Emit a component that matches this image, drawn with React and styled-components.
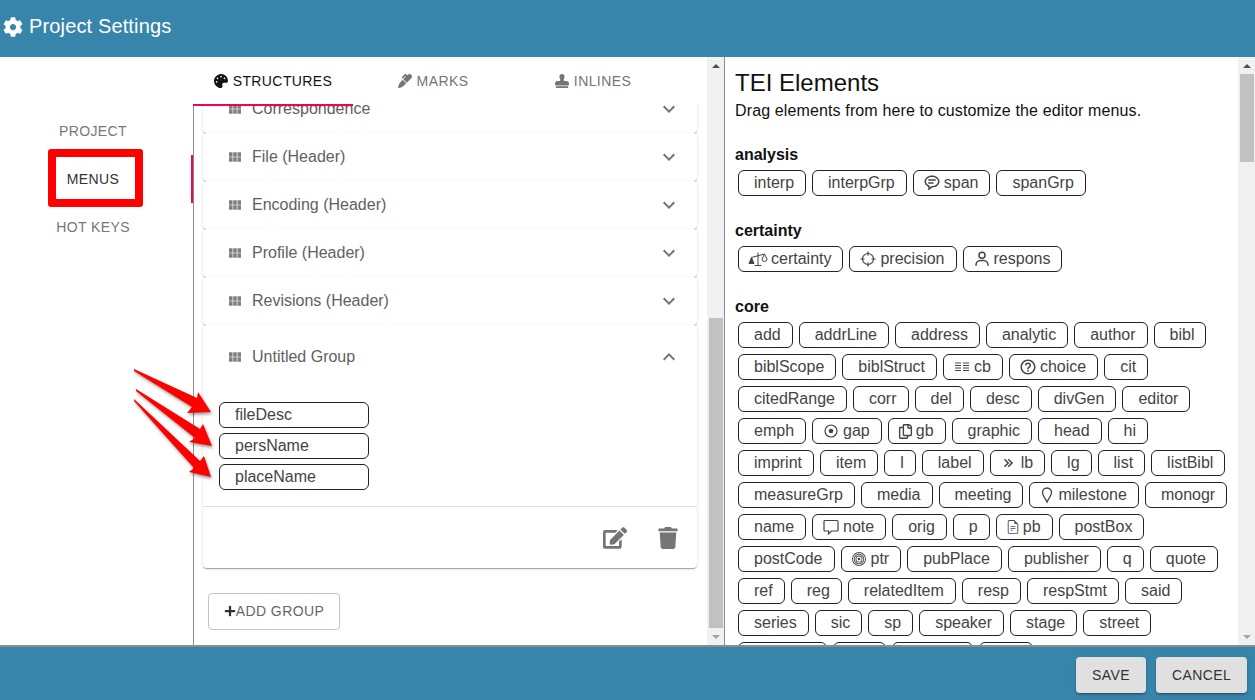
import React from "react";
import styled, { createGlobalStyle } from "styled-components";
import { FaCog, FaPalette, FaMarker, FaStamp, FaEdit, FaTrash, FaPlus, FaRegCopy } from "react-icons/fa";
import { MdViewModule, MdExpandMore, MdExpandLess } from "react-icons/md";
import { BiMessageRoundedDetail, BiUser, BiHelpCircle, BiChevronsRight } from "react-icons/bi";
import { BsBullseye, BsFileEarmarkText } from "react-icons/bs";

const GlobalStyle = createGlobalStyle`
  html, body {
    margin: 0;
    padding: 0;
    overflow: hidden;
    font-family: "Liberation Sans", Arial, sans-serif;
  }
`;

const Page = styled.div`
  position: relative;
  width: 1255px;
  height: 700px;
  display: flex;
  flex-direction: column;
  background: #fff;
  overflow: hidden;
`;

const Header = styled.header`
  height: 57px;
  flex: none;
  display: flex;
  align-items: center;
  gap: 6px;
  padding: 0 0 4px 3px;
  box-sizing: border-box;
  background: #3885ac;
  color: #fff;
  font-size: 20px;
  letter-spacing: 0.14px;
`;

const Body = styled.div`
  flex: 1;
  min-height: 0;
  display: flex;
  border-bottom: 2px solid #8c8c8c;
`;

const Nav = styled.nav`
  width: 193px;
  flex: none;
  padding-top: 50px;
  box-sizing: border-box;
`;

const NavTab = styled.div`
  position: relative;
  height: 48px;
  display: flex;
  align-items: center;
  justify-content: center;
  box-sizing: border-box;
  padding-right: 5px;
  border-right: 2px solid ${(p) => (p.$active ? "#f50057" : "transparent")};
  font-size: 14px;
  letter-spacing: 0.4px;
  color: ${(p) => (p.$active ? "#333" : "#777")};

  ${(p) =>
    p.$active &&
    `&::before {
      content: "";
      position: absolute;
      left: 48px;
      top: -6px;
      width: 95px;
      height: 58px;
      box-sizing: border-box;
      border: 8px solid #f00;
      border-radius: 3px;
    }`}
`;

const Middle = styled.section`
  width: 532px;
  flex: none;
  box-sizing: border-box;
  display: flex;
  border-right: 1px solid #8c8c8c;
`;

const MainColumn = styled.div`
  flex: 1;
  min-width: 0;
  display: flex;
  flex-direction: column;
`;

const Tabs = styled.div`
  height: 48px;
  flex: none;
  display: flex;
`;

const Tab = styled.div`
  position: relative;
  width: 160px;
  display: flex;
  align-items: center;
  justify-content: center;
  gap: 5px;
  font-size: 14px;
  letter-spacing: 0.4px;
  color: ${(p) => (p.$active ? "#111" : "#757575")};

  ${(p) =>
    p.$active &&
    `&::after {
      content: "";
      position: absolute;
      left: 0;
      right: 0;
      bottom: -1px;
      height: 2px;
      background: #f50057;
    }`}
`;

const GroupList = styled.div`
  flex: 1;
  min-height: 0;
  overflow: hidden;
  border-left: 1px solid #8c8c8c;
  padding: 0 10px 0 9px;
`;

const GroupStack = styled.div`
  margin-top: -20px;
`;

const Card = styled.div`
  background: #fff;
  border-radius: 4px;
  box-shadow: 0 2px 1px -1px rgba(0, 0, 0, 0.2), 0 1px 1px 0 rgba(0, 0, 0, 0.14),
    0 1px 3px 0 rgba(0, 0, 0, 0.12);
`;

const Summary = styled.div`
  height: ${(p) => (p.$open ? "64px" : "48px")};
  display: flex;
  align-items: center;
  padding: 0 16px 0 24px;
  box-sizing: border-box;
  color: #616161;
  font-size: 16px;
`;

const Grip = styled(MdViewModule)`
  font-size: 16px;
  color: #808080;
  margin-right: 9px;
`;

const Title = styled.span`
  flex: 1;
`;

const Chevron = styled.span`
  display: flex;
  font-size: 24px;
  color: #757575;
`;

const Details = styled.div`
  display: flex;
  flex-direction: column;
  gap: 5px;
  padding: 13px 16px 16px;
  border-bottom: 1px solid #e0e0e0;
`;

const MenuItem = styled.div`
  width: 150px;
  height: 26px;
  box-sizing: border-box;
  display: flex;
  align-items: center;
  padding-left: 15px;
  border: 1px solid #222;
  border-radius: 6px;
  font-size: 16px;
  color: #444;
`;

const Actions = styled.div`
  height: 61px;
  display: flex;
  align-items: center;
  justify-content: flex-end;
  gap: 30px;
  padding-right: 18px;
  color: #757575;
`;

const AddButton = styled.button`
  display: flex;
  align-items: center;
  justify-content: center;
  width: 132px;
  height: 37px;
  margin: 25px 0 0 5px;
  padding: 0 0 1px;
  background: #fff;
  border: 1px solid #c4c4c4;
  border-radius: 4px;
  font: 14px "Liberation Sans", Arial, sans-serif;
  letter-spacing: 0.4px;
  color: #666;

  svg {
    color: #333;
    font-size: 12px;
  }
`;

const Scrollbar = styled.div`
  width: 17px;
  flex: none;
  display: flex;
  flex-direction: column;
  align-items: center;
  background: #f1f1f1;
  box-sizing: border-box;
`;

const ArrowBox = styled.div`
  height: 17px;
  flex: none;
  display: flex;
  align-items: center;
  justify-content: center;
`;

const Arrow = styled.span`
  width: 0;
  height: 0;
  border-left: 4px solid transparent;
  border-right: 4px solid transparent;
  ${(p) =>
    p.$down ? "border-top: 4px solid #a3a3a3;" : "border-bottom: 4px solid #505050;"}
`;

const Track = styled.div`
  flex: 1;
  width: 100%;
  min-height: 0;
  display: flex;
  flex-direction: column;
  align-items: center;
`;

const Thumb = styled.div`
  width: 14px;
  flex: none;
  background: #c1c1c1;
  margin-top: ${(p) => p.$top}px;
  height: ${(p) => p.$height}px;
`;

const Right = styled.section`
  flex: 1;
  min-width: 0;
  display: flex;
`;

const Palette = styled.div`
  flex: 1;
  min-width: 0;
  overflow: hidden;
  padding: 12px 7px 0 10px;
  color: #111;
`;

const PaletteTitle = styled.h1`
  margin: 0;
  font-size: 24px;
  font-weight: 400;
  line-height: 28px;
`;

const PaletteHint = styled.p`
  margin: 5px 0 26px;
  font-size: 16px;
  line-height: 18px;
  letter-spacing: 0.13px;
`;

const Section = styled.div`
  margin-bottom: 23px;
`;

const SectionName = styled.h2`
  margin: 0 0 3px;
  font-size: 16px;
  font-weight: 700;
  line-height: 18px;
`;

const ChipWrap = styled.div`
  display: flex;
  flex-wrap: wrap;
`;

const Chip = styled.div`
  height: 26px;
  margin: 3px;
  box-sizing: border-box;
  display: flex;
  align-items: center;
  gap: 3px;
  padding: ${(p) => (p.$icon ? "0 11px 0 9px" : "0 11px 0 15px")};
  border: 1px solid #222;
  border-radius: 6px;
  font-size: 16px;
  color: #444;
  white-space: nowrap;

  svg {
    font-size: 18px;
    flex: none;
  }
`;

const Footer = styled.footer`
  height: 53px;
  flex: none;
  display: flex;
  justify-content: flex-end;
  align-items: center;
  gap: 10px;
  padding: 2px 8px 0 0;
  box-sizing: border-box;
  background: #3885ac;
`;

const FootButton = styled.button`
  height: 36px;
  width: ${(p) => p.$width}px;
  padding: 0;
  border: 0;
  border-radius: 4px;
  background: #e0e0e0;
  box-shadow: 0 3px 1px -2px rgba(0, 0, 0, 0.2), 0 2px 2px 0 rgba(0, 0, 0, 0.14),
    0 1px 5px 0 rgba(0, 0, 0, 0.12);
  font: 14px "Liberation Sans", Arial, sans-serif;
  letter-spacing: 0.4px;
  color: #333;
`;

const Annotations = styled.svg`
  position: absolute;
  left: 125px;
  top: 360px;
  width: 100px;
  height: 125px;
  filter: drop-shadow(1px 2px 1.5px rgba(0, 0, 0, 0.4));
`;

const Bullseye = styled(BsBullseye)`
  margin: 0 2px 0 1px;
`;

const ColumnsIcon = () => (
  <svg width="1em" height="1em" viewBox="0 0 18 18" stroke="currentColor" strokeWidth="1" fill="none">
    <path d="M2 5h6M2 7.500h6M2 10h6M2 12.500h6M10 5h6M10 7.500h6M10 10h6M10 12.500h6" />
  </svg>
);

const PinIcon = () => (
  <svg width="16" height="18" viewBox="0 0 16 18" stroke="currentColor" strokeWidth="1.3" fill="none">
    <path d="M8 16C6.500 12.500 3.500 10 3.500 6.500a4.500 4.500 0 0 1 9 0C12.500 10 9.500 12.500 8 16z" />
  </svg>
);

// tilted scales, left pan hanging lower
const ScaleIcon = () => (
  <svg width="20" height="16" viewBox="0 0 20 16" stroke="currentColor" strokeWidth="1" fill="none">
    <path d="M10 1.500V14M6.500 14.500h7M3.500 6.500l13-3.500" />
    <path d="M3.500 6.500L1 12.500h5z" fill="currentColor" />
    <path d="M16.500 3l-2.500 5a2.500 2.500 0 0 0 5 0z" />
  </svg>
);

const CrosshairIcon = () => (
  <svg width="1em" height="1em" viewBox="0 0 18 18" stroke="currentColor" strokeWidth="1.2" fill="none">
    <circle cx="9" cy="9" r="5.500" />
    <path d="M9 1.500v4M9 12.500v4M1.500 9h4M12.500 9h4" />
  </svg>
);

const RingIcon = () => (
  <svg width="1em" height="1em" viewBox="0 0 18 18">
    <circle cx="9" cy="9" r="6" stroke="currentColor" strokeWidth="1.2" fill="none" />
    <circle cx="9" cy="9" r="2.300" fill="currentColor" />
  </svg>
);

const BubbleIcon = () => (
  <svg width="1em" height="1em" viewBox="0 0 18 18" stroke="currentColor" strokeWidth="1.2" fill="none">
    <path d="M3 2.500h12a1 1 0 0 1 1 1v8.500a1 1 0 0 1-1 1H9.500l-3 2.800v-2.800H3a1 1 0 0 1-1-1V3.500a1 1 0 0 1 1-1z" />
  </svg>
);

const chipIcons = {
  span: <BiMessageRoundedDetail />,
  certainty: <ScaleIcon />,
  precision: <CrosshairIcon />,
  respons: <BiUser />,
  cb: <ColumnsIcon />,
  choice: <BiHelpCircle />,
  gap: <RingIcon />,
  gb: <FaRegCopy size={15} />,
  lb: <BiChevronsRight />,
  milestone: <PinIcon />,
  note: <BubbleIcon />,
  pb: <BsFileEarmarkText size={14} />,
  ptr: <Bullseye size={14} />,
};

const sections = [
  { name: "analysis", items: ["interp", "interpGrp", "span", "spanGrp"] },
  { name: "certainty", items: ["certainty", "precision", "respons"] },
  {
    name: "core",
    items: [
      "add", "addrLine", "address", "analytic", "author", "bibl",
      "biblScope", "biblStruct", "cb", "choice", "cit",
      "citedRange", "corr", "del", "desc", "divGen", "editor",
      "emph", "gap", "gb", "graphic", "head", "hi",
      "imprint", "item", "l", "label", "lb", "lg", "list", "listBibl",
      "measureGrp", "media", "meeting", "milestone", "monogr",
      "name", "note", "orig", "p", "pb", "postBox",
      "postCode", "ptr", "pubPlace", "publisher", "q", "quote",
      "ref", "reg", "relatedItem", "resp", "respStmt", "said",
      "series", "sic", "sp", "speaker", "stage", "street",
      "textLang", "title", "unclear", "unit",
    ],
  },
];

const groups = ["Correspondence", "File (Header)", "Encoding (Header)", "Profile (Header)", "Revisions (Header)"];

function ScrollColumn({ top, height }) {
  return (
    <Scrollbar>
      <ArrowBox>
        <Arrow />
      </ArrowBox>
      <Track>
        <Thumb $top={top} $height={height} />
      </Track>
      <ArrowBox>
        <Arrow $down />
      </ArrowBox>
    </Scrollbar>
  );
}

export default function App() {
  return (
    <Page>
      <GlobalStyle />
      <Header>
        <FaCog />
        Project Settings
      </Header>

      <Body>
        <Nav>
          <NavTab>PROJECT</NavTab>
          <NavTab $active>MENUS</NavTab>
          <NavTab>HOT KEYS</NavTab>
        </Nav>

        <Middle>
          <MainColumn>
            <Tabs>
              <Tab $active>
                <FaPalette />
                STRUCTURES
              </Tab>
              <Tab>
                <FaMarker />
                MARKS
              </Tab>
              <Tab>
                <FaStamp />
                INLINES
              </Tab>
            </Tabs>
            <GroupList>
              <GroupStack>
                {groups.map((g) => (
                  <Card key={g}>
                    <Summary>
                      <Grip />
                      <Title>{g}</Title>
                      <Chevron>
                        <MdExpandMore />
                      </Chevron>
                    </Summary>
                  </Card>
                ))}
                <Card>
                  <Summary $open>
                    <Grip />
                    <Title>Untitled Group</Title>
                    <Chevron>
                      <MdExpandLess />
                    </Chevron>
                  </Summary>
                  <Details>
                    <MenuItem>fileDesc</MenuItem>
                    <MenuItem>persName</MenuItem>
                    <MenuItem>placeName</MenuItem>
                  </Details>
                  <Actions>
                    <FaEdit size={24} />
                    <FaTrash size={22} />
                  </Actions>
                </Card>
                <AddButton>
                  <FaPlus />
                  ADD GROUP
                </AddButton>
              </GroupStack>
            </GroupList>
          </MainColumn>
          <ScrollColumn top={244} height={310} />
        </Middle>

        <Right>
          <Palette>
            <PaletteTitle>TEI Elements</PaletteTitle>
            <PaletteHint>Drag elements from here to customize the editor menus.</PaletteHint>
            {sections.map((s) => (
              <Section key={s.name}>
                <SectionName>{s.name}</SectionName>
                <ChipWrap>
                  {s.items.map((item) => (
                    <Chip key={item} $icon={!!chipIcons[item]}>
                      {chipIcons[item]}
                      {item}
                    </Chip>
                  ))}
                </ChipWrap>
              </Section>
            ))}
          </Palette>
          <ScrollColumn top={0} height={88} />
        </Right>
      </Body>

      <Footer>
        <FootButton $width={70}>SAVE</FootButton>
        <FootButton $width={91}>CANCEL</FootButton>
      </Footer>

      <Annotations viewBox="125 360 100 125">
        <g fill="#f00">
          <polygon points="134,369 197,398 198,392 211,412 187,413 192,407 134,371" />
          <polygon points="136,389 200,429 203,424 212,446 189,442 195,438 136,391" />
          <polygon points="134,399 200,461 204,456 211,477 189,472 194,468 134,401" />
        </g>
      </Annotations>
    </Page>
  );
}
